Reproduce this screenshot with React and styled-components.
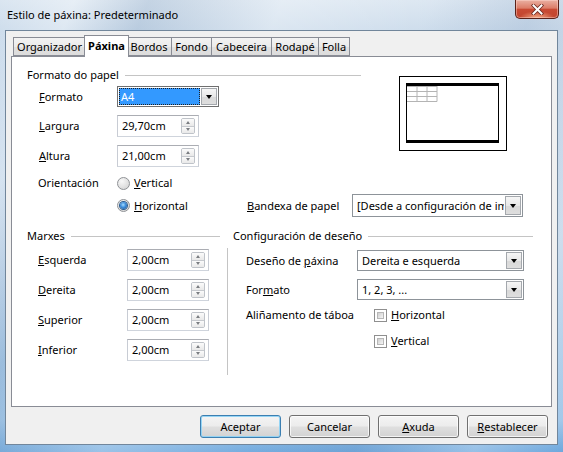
import React from "react";
import styled, { createGlobalStyle, css } from "styled-components";

const FONT = `"Noto Sans", "Open Sans", "DejaVu Sans", sans-serif`;

const GlobalStyle = createGlobalStyle`
  html, body { margin: 0; padding: 0; background: #ffffff; }
  body { font-family: ${FONT}; font-size: 11px; }
  #root { width: 563px; height: 452px; }
`;

const Window = styled.div`
  width: 563px;
  height: 452px;
  box-sizing: border-box;
  display: flex;
  flex-direction: column;
  overflow: hidden;
  font-family: ${FONT};
  font-size: 11px;
  color: #000;
  background:
    linear-gradient(112deg,
      rgba(255,255,255,0) 0%,
      rgba(255,255,255,0.35) 10%,
      rgba(110,140,175,0.20) 20%,
      rgba(255,255,255,0.30) 38%,
      rgba(255,255,255,0.05) 58%,
      rgba(110,140,180,0.18) 72%,
      rgba(255,255,255,0.28) 88%,
      rgba(255,255,255,0) 100%),
    linear-gradient(180deg, #dbe6f1 0%, #cbdbeb 7%, #b9d0e7 55%, #9fc6e9 93%, #6ea8dd 100%);
`;

const TitleBar = styled.div`
  flex: none;
  height: 30px;
  display: flex;
  align-items: flex-start;
`;

const TitleText = styled.div`
  padding: 7px 0 0 7px;
  line-height: 16px;
  white-space: nowrap;
`;

const CloseButton = styled.div`
  margin-left: auto;
  margin-right: 4px;
  width: 44px;
  height: 19px;
  box-sizing: border-box;
  border: 1px solid #5a2219;
  border-top: none;
  border-radius: 0 0 5px 5px;
  background:
    radial-gradient(ellipse 60% 55% at 50% 100%, rgba(255,190,150,0.85), rgba(255,190,150,0) 70%),
    linear-gradient(180deg, #eab0a2 0%, #dc7d68 45%, #c84a33 52%, #c2452e 100%);
  box-shadow: inset 0 0 0 1px rgba(255,220,210,0.45);
  display: flex;
  align-items: center;
  justify-content: center;
`;

const Client = styled.div`
  flex: 1;
  margin: 0 5px 7px 5px;
  box-sizing: border-box;
  border: 1px solid #71869b;
  background: #f0f0f0;
  display: flex;
  flex-direction: column;
  padding: 4px 5px 0 5px;
`;

const TabStrip = styled.div`
  flex: none;
  height: 21px;
  display: flex;
  align-items: flex-start;
  padding-left: 2px;
  position: relative;
  z-index: 2;
`;

const Tab = styled.div`
  box-sizing: border-box;
  width: ${(p) => p.$w}px;
  height: ${(p) => (p.$active ? 22 : 19)}px;
  margin-top: ${(p) => (p.$active ? 0 : 2)}px;
  margin-left: ${(p) => (p.$active ? -2 : -1)}px;
  margin-right: ${(p) => (p.$active ? -2 : 0)}px;
  border: 1px solid #898c95;
  border-bottom: ${(p) => (p.$active ? "none" : "1px solid #898c95")};
  background: ${(p) =>
    p.$active ? "#ffffff" : "linear-gradient(180deg, #f3f3f3 0%, #ebebeb 50%, #e0e0e0 55%, #dcdcdc 100%)"};
  font-weight: ${(p) => (p.$active ? 700 : 400)};
  display: flex;
  align-items: center;
  justify-content: center;
  padding-bottom: ${(p) => (p.$active ? 2 : 0)}px;
  white-space: nowrap;
  position: relative;
  z-index: ${(p) => (p.$active ? 2 : 1)};
  &:first-child { margin-left: 0; }
`;

const Panel = styled.div`
  flex: none;
  height: 351px;
  box-sizing: border-box;
  border: 1px solid #898c95;
  background: #ffffff;
  padding: 10px 15px 0 15px;
  display: flex;
  flex-direction: column;
  position: relative;
  z-index: 1;
`;

const SectionHeader = styled.div`
  display: flex;
  align-items: center;
  height: 16px;
  line-height: 16px;
  padding-left: ${(p) => p.$indent || 0}px;
  margin-right: ${(p) => p.$trim || 0}px;
  white-space: nowrap;
  &::after {
    content: "";
    flex: 1;
    height: 1px;
    margin-left: 6px;
    margin-top: 1px;
    background: #c4c4c4;
  }
`;

const TopRow = styled.div`
  display: flex;
  align-items: flex-start;
`;

const LeftCol = styled.div`
  width: 334px;
  flex: none;
  display: flex;
  flex-direction: column;
`;

const PreviewBox = styled.svg`
  flex: none;
  margin-left: 38px;
  margin-top: 9px;
  display: block;
`;

const FieldRow = styled.div`
  display: flex;
  align-items: center;
  height: ${(p) => p.$h}px;
  margin-top: ${(p) => p.$mt || 0}px;
  padding-left: ${(p) => p.$indent || 0}px;
  line-height: 16px;
`;

const Label = styled.div`
  width: ${(p) => p.$w}px;
  flex: none;
  white-space: nowrap;
`;

const Key = styled.span`
  text-decoration: underline;
  text-underline-offset: 1px;
`;

const SpinBox = styled.div`
  width: ${(p) => p.$w}px;
  height: 22px;
  box-sizing: border-box;
  border: 1px solid #abadb3;
  border-color: #abadb3 #c8ccd4 #cfd4dc #c8ccd4;
  background: #fff;
  display: flex;
  align-items: center;
  padding: 0 3px 0 4px;
  flex: none;
`;

const SpinText = styled.span`
  flex: 1;
  white-space: nowrap;
`;

const Spinner = styled.div`
  width: 14px;
  height: 16px;
  display: flex;
  flex-direction: column;
  box-sizing: border-box;
  border: 1px solid #bfc3c9;
  border-radius: 2px;
  overflow: hidden;
`;

const SpinHalf = styled.div`
  flex: 1;
  display: flex;
  align-items: center;
  justify-content: center;
  background: linear-gradient(180deg, #fbfbfb, #e9e9e9);
  & + & { border-top: 1px solid #c6c9ce; }
  &::after {
    content: "";
    border-left: 2.5px solid transparent;
    border-right: 2.5px solid transparent;
    ${(p) =>
      p.$up
        ? css`border-bottom: 3px solid #7a7d82;`
        : css`border-top: 3px solid #7a7d82;`}
  }
`;

const Select = styled.div`
  width: ${(p) => p.$w}px;
  height: ${(p) => p.$h}px;
  box-sizing: border-box;
  border: 1px solid ${(p) => (p.$focus ? "#6f6f6f" : "#8d9399")};
  background: #fff;
  display: flex;
  padding: 1px;
  flex: none;
`;

const SelectValue = styled.div`
  flex: 1;
  min-width: 0;
  display: flex;
  align-items: center;
  padding-left: ${(p) => (p.$highlight ? 2 : 3)}px;
  overflow: hidden;
  white-space: nowrap;
  ${(p) =>
    p.$highlight &&
    css`
      background: #3399ff;
      color: #fff;
      outline: 1px dotted #202020;
      outline-offset: -1px;
    `}
`;

const DropButton = styled.div`
  width: 16px;
  flex: none;
  box-sizing: border-box;
  margin-left: 1px;
  border: 1px solid #a4a8ad;
  background: linear-gradient(180deg, #f6f6f6 0%, #e8e8e8 50%, #d9d9d9 52%, #dedede 100%);
  display: flex;
  align-items: center;
  justify-content: center;
  &::after {
    content: "";
    border-left: 3.5px solid transparent;
    border-right: 3.5px solid transparent;
    border-top: 4px solid #000;
    margin-top: 1px;
  }
`;

const Option = styled.div`
  display: flex;
  align-items: center;
  gap: 4px;
  width: ${(p) => (p.$w ? `${p.$w}px` : "auto")};
  flex: none;
  white-space: nowrap;
`;

const Radio = styled.span`
  width: 13px;
  height: 13px;
  box-sizing: border-box;
  border-radius: 50%;
  border: 1px solid #8f9296;
  background: radial-gradient(circle at 35% 30%, #f8f8f8 0%, #e2e2e2 55%, #cfcfcf 100%);
  display: inline-flex;
  align-items: center;
  justify-content: center;
  flex: none;
  &::after {
    content: "";
    width: 7px;
    height: 7px;
    border-radius: 50%;
    ${(p) =>
      p.$checked
        ? css`
            background: radial-gradient(circle at 45% 40%, #a6dcff 0%, #3c8ddc 45%, #1a4f8c 100%);
            box-shadow: 0 0 0 1px #2b5c8f;
          `
        : css`
            background: transparent;
          `}
  }
`;

const CheckBox = styled.span`
  width: 13px;
  height: 13px;
  box-sizing: border-box;
  border: 1px solid #8f8f8f;
  background: #fff;
  padding: 2px;
  flex: none;
  &::after {
    content: "";
    display: block;
    width: 100%;
    height: 100%;
    box-sizing: border-box;
    border: 1px solid #b7b7b7;
    background: linear-gradient(135deg, #cfcfcf 0%, #e6e6e6 60%, #f4f4f4 100%);
  }
`;

const Columns = styled.div`
  display: flex;
  margin-top: 11px;
`;

const LeftPane = styled.div`
  width: 194px;
  flex: none;
  display: flex;
  flex-direction: column;
`;

const RightPane = styled.div`
  width: 306px;
  margin-left: 6px;
  flex: none;
  display: flex;
  flex-direction: column;
`;

const RightBody = styled.div`
  margin-top: 4px;
  height: 127px;
  border-left: 1px solid #c4c4c4;
  padding-left: 18px;
  display: flex;
  flex-direction: column;
`;

const Footer = styled.div`
  display: flex;
  justify-content: flex-end;
  gap: 8px;
  margin-top: 8px;
  padding-right: 4px;
`;

const Button = styled.div`
  width: 81px;
  height: 23px;
  box-sizing: border-box;
  border: 1px solid ${(p) => (p.$default ? "#3c7fb1" : "#707070")};
  border-radius: 3px;
  background: linear-gradient(180deg, #f4f4f4 0%, #ececec 48%, #dfdfdf 52%, #d2d2d2 100%);
  box-shadow: inset 0 0 0 1px ${(p) => (p.$default ? "rgba(140,210,245,0.9)" : "rgba(255,255,255,0.75)")};
  display: flex;
  align-items: center;
  justify-content: center;
  white-space: nowrap;
  line-height: 16px;
`;

function Spin({ value, w }) {
  return (
    <SpinBox $w={w}>
      <SpinText>{value}</SpinText>
      <Spinner>
        <SpinHalf $up />
        <SpinHalf />
      </Spinner>
    </SpinBox>
  );
}

function Combo({ value, w, h = 21, focus, highlight }) {
  return (
    <Select $w={w} $h={h} $focus={focus}>
      <SelectValue $highlight={highlight}>{value}</SelectValue>
      <DropButton />
    </Select>
  );
}

function PagePreview() {
  const gridX = [7, 17.5, 27.5, 37.5];
  const gridY = [10, 15, 20, 25];
  return (
    <PreviewBox width="108" height="75" viewBox="0 0 108 75">
      <rect x="0.5" y="0.5" width="107" height="74" fill="#fff" stroke="#000" />
      <rect x="7" y="7" width="93" height="60" fill="#fff" />
      {gridY.map((y) => (
        <line key={`h${y}`} x1="7" x2="38" y1={y + 0.5} y2={y + 0.5} stroke="#b4b4b4" />
      ))}
      {gridX.map((x) => (
        <line key={`v${x}`} x1={x + 0.5} x2={x + 0.5} y1="10" y2="25.5" stroke="#b4b4b4" />
      ))}
      <rect x="7" y="7" width="93" height="3" fill="#000" />
      <rect x="7" y="64" width="93" height="3" fill="#000" />
      <line x1="7.5" x2="7.5" y1="7" y2="67" stroke="#000" />
      <line x1="99.5" x2="99.5" y1="7" y2="67" stroke="#000" />
    </PreviewBox>
  );
}

const tabs = [
  { label: "Organizador", w: 73 },
  { label: "Páxina", w: 45, active: true },
  { label: "Bordos", w: 46 },
  { label: "Fondo", w: 41 },
  { label: "Cabeceira", w: 61 },
  { label: "Rodapé", w: 48 },
  { label: "Folla", w: 32 },
];

const margins = [
  { k: "E", rest: "squerda", v: "2,00cm" },
  { k: "D", rest: "ereita", v: "2,00cm" },
  { k: "S", rest: "uperior", v: "2,00cm" },
  { k: "I", rest: "nferior", v: "2,00cm" },
];

export default function App() {
  return (
    <>
      <GlobalStyle />
      <Window>
        <TitleBar>
          <TitleText>Estilo de páxina: Predeterminado</TitleText>
          <CloseButton>
            <svg width="13" height="11" viewBox="0 0 13 11">
              <path d="M2.5 1.5 L10.5 9.5 M10.5 1.5 L2.5 9.5" stroke="#6a2a20" strokeWidth="3.6" strokeLinecap="square" />
              <path d="M2.5 1.5 L10.5 9.5 M10.5 1.5 L2.5 9.5" stroke="#ffffff" strokeWidth="2" strokeLinecap="square" />
            </svg>
          </CloseButton>
        </TitleBar>

        <Client>
          <TabStrip>
            {tabs.map((t) => (
              <Tab key={t.label} $w={t.w} $active={t.active}>
                {t.label}
              </Tab>
            ))}
          </TabStrip>

          <Panel>
            <TopRow>
              <LeftCol>
                <SectionHeader>Formato do papel</SectionHeader>
                <FieldRow $h={21} $mt={3} $indent={12}>
                  <Label $w={78}>
                    <Key>F</Key>ormato
                  </Label>
                  <Combo value="A4" w={102} focus highlight />
                </FieldRow>
                <FieldRow $h={22} $mt={8} $indent={12}>
                  <Label $w={78}>
                    <Key>L</Key>argura
                  </Label>
                  <Spin value="29,70cm" w={82} />
                </FieldRow>
                <FieldRow $h={22} $mt={8} $indent={12}>
                  <Label $w={78}>
                    <Key>A</Key>ltura
                  </Label>
                  <Spin value="21,00cm" w={82} />
                </FieldRow>
                <FieldRow $h={16} $mt={8} $indent={11}>
                  <Label $w={79}>Orientación</Label>
                  <Option>
                    <Radio />
                    <span>
                      <Key>V</Key>ertical
                    </span>
                  </Option>
                </FieldRow>
              </LeftCol>
              <PagePreview />
            </TopRow>

            <FieldRow $h={23} $mt={3} $indent={90}>
              <Option $w={130}>
                <Radio $checked />
                <span>
                  <Key>H</Key>orizontal
                </span>
              </Option>
              <Label $w={105}>
                <Key>B</Key>andexa de papel
              </Label>
              <Combo value="[Desde a configuración de impresora]" w={171} h={23} />
            </FieldRow>

            <Columns>
              <LeftPane>
                <SectionHeader $trim={1}>Marxes</SectionHeader>
                {margins.map((m, i) => (
                  <FieldRow key={m.k} $h={22} $mt={i === 0 ? 5 : 8} $indent={11}>
                    <Label $w={89}>
                      <Key>{m.k}</Key>
                      {m.rest}
                    </Label>
                    <Spin value={m.v} w={82} />
                  </FieldRow>
                ))}
              </LeftPane>

              <RightPane>
                <SectionHeader $indent={6}>Configuración de deseño</SectionHeader>
                <RightBody>
                  <FieldRow $h={21} $mt={2}>
                    <Label $w={111}>
                      Deseño de <Key>p</Key>áxina
                    </Label>
                    <Combo value="Dereita e esquerda" w={167} />
                  </FieldRow>
                  <FieldRow $h={21} $mt={8}>
                    <Label $w={111}>
                      For<Key>m</Key>ato
                    </Label>
                    <Combo value="1, 2, 3, ..." w={167} />
                  </FieldRow>
                  <FieldRow $h={16} $mt={7}>
                    <Label $w={128}>Aliñamento de táboa</Label>
                    <Option>
                      <CheckBox />
                      <span>
                        <Key>H</Key>orizontal
                      </span>
                    </Option>
                  </FieldRow>
                  <FieldRow $h={16} $mt={10} $indent={128}>
                    <Option>
                      <CheckBox />
                      <span>
                        <Key>V</Key>ertical
                      </span>
                    </Option>
                  </FieldRow>
                </RightBody>
              </RightPane>
            </Columns>
          </Panel>

          <Footer>
            <Button $default>Aceptar</Button>
            <Button>Cancelar</Button>
            <Button>
              <Key>A</Key>xuda
            </Button>
            <Button>
              <Key>R</Key>establecer
            </Button>
          </Footer>
        </Client>
      </Window>
    </>
  );
}
